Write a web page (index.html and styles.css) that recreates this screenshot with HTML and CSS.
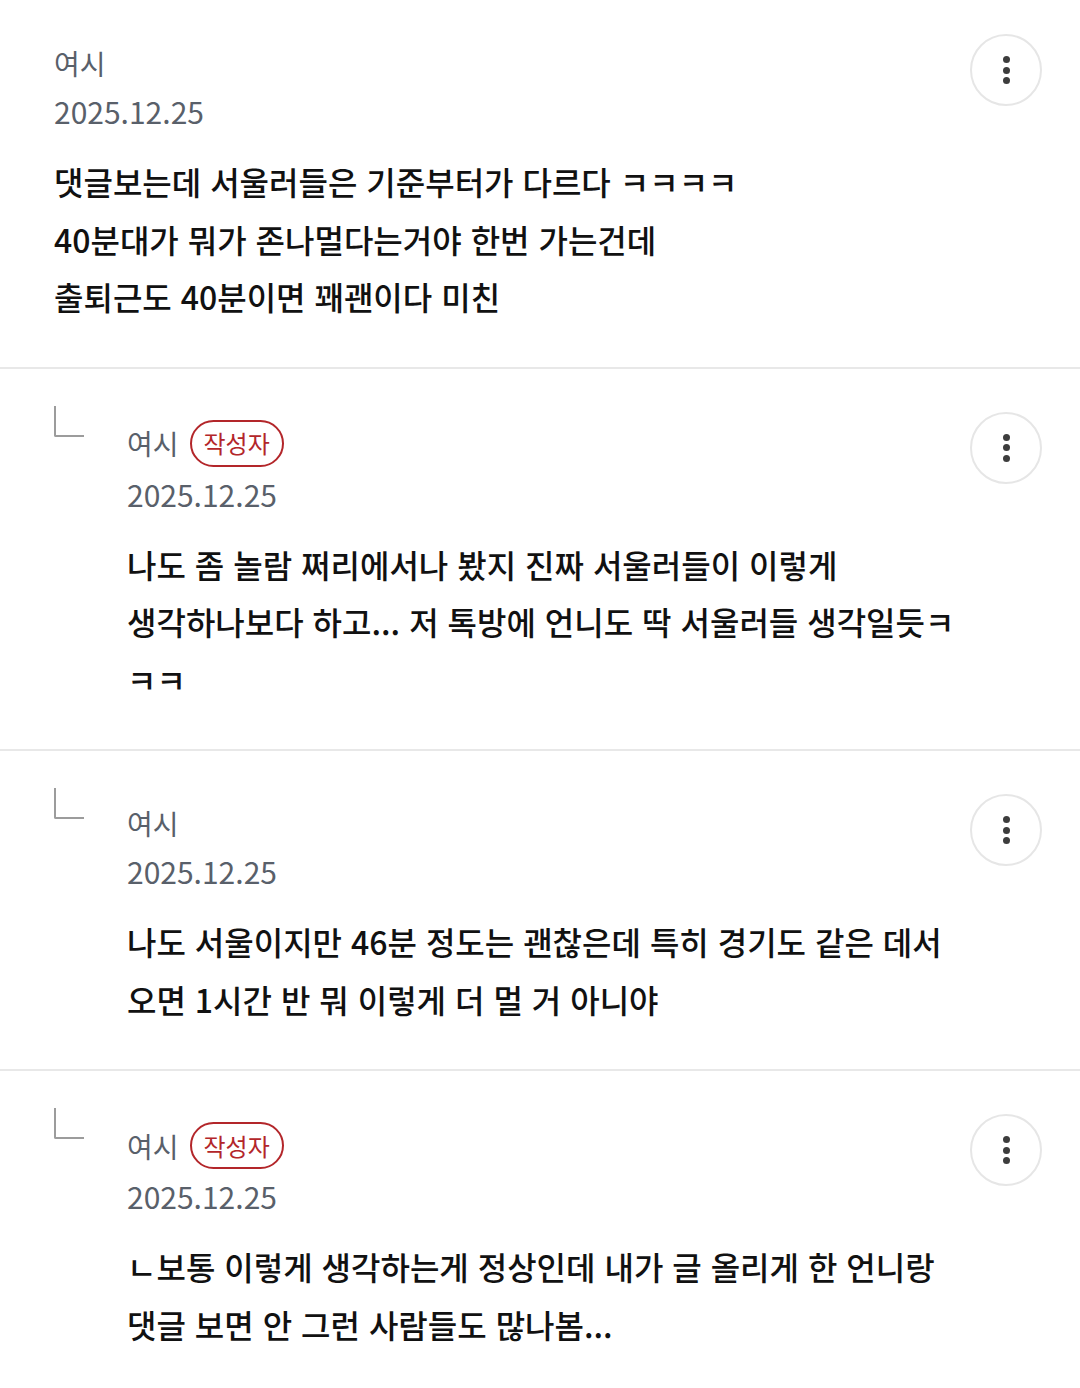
FILE: index.html
```html
<!DOCTYPE html>
<html lang="ko">
<head>
<meta charset="utf-8">
<title>댓글</title>
<link rel="stylesheet" href="styles.css">
</head>
<body>
<div class="comments">
  <div class="comment comment--first">
    <div class="content">
      <div class="meta"><span class="name">여시</span></div>
      <div class="date">2025.12.25</div>
      <p class="text">댓글보는데 서울러들은 기준부터가 다르다 ㅋㅋㅋㅋ<br>40분대가 뭐가 존나멀다는거야 한번 가는건데<br>출퇴근도 40분이면 꽤괜이다 미친</p>
    </div>
    <button class="more" aria-label="더보기"><span class="dot"></span><span class="dot"></span><span class="dot"></span></button>
  </div>

  <div class="comment comment--reply">
    <div class="reply-col"><span class="reply-mark"></span></div>
    <div class="content">
      <div class="meta"><span class="name">여시</span><span class="badge">작성자</span></div>
      <div class="date">2025.12.25</div>
      <p class="text">나도 좀 놀람 쩌리에서나 봤지 진짜 서울러들이 이렇게<br>생각하나보다 하고... 저 톡방에 언니도 딱 서울러들 생각일듯ㅋ<br>ㅋㅋ</p>
    </div>
    <button class="more" aria-label="더보기"><span class="dot"></span><span class="dot"></span><span class="dot"></span></button>
  </div>

  <div class="comment comment--reply">
    <div class="reply-col"><span class="reply-mark"></span></div>
    <div class="content">
      <div class="meta"><span class="name">여시</span></div>
      <div class="date">2025.12.25</div>
      <p class="text">나도 서울이지만 46분 정도는 괜찮은데 특히 경기도 같은 데서<br>오면 1시간 반 뭐 이렇게 더 멀 거 아니야</p>
    </div>
    <button class="more" aria-label="더보기"><span class="dot"></span><span class="dot"></span><span class="dot"></span></button>
  </div>

  <div class="comment comment--reply">
    <div class="reply-col"><span class="reply-mark"></span></div>
    <div class="content">
      <div class="meta"><span class="name">여시</span><span class="badge">작성자</span></div>
      <div class="date">2025.12.25</div>
      <p class="text">ㄴ보통 이렇게 생각하는게 정상인데 내가 글 올리게 한 언니랑<br>댓글 보면 안 그런 사람들도 많나봄...</p>
    </div>
    <button class="more" aria-label="더보기"><span class="dot"></span><span class="dot"></span><span class="dot"></span></button>
  </div>
</div>
</body>
</html>
```

FILE: styles.css
```css
html, body {
  margin: 0;
  padding: 0;
  background: #ffffff;
}

body {
  font-family: "Noto Sans CJK KR", "Noto Sans", sans-serif;
  color: #111111;
  width: 1080px;
  overflow: hidden;
}

.comments {
  display: flex;
  flex-direction: column;
}

.comment {
  display: flex;
  align-items: flex-start;
  padding: 43px 38px 41px 54px;
  border-bottom: 2px solid #e8e8e8;
}

.comment--first {
  padding-top: 34px;
}

.reply-col {
  width: 73px;
  flex: none;
}

.reply-mark {
  display: block;
  width: 28px;
  height: 29px;
  margin-top: -6px;
  border-left: 2px solid #9c9c9c;
  border-bottom: 2px solid #9c9c9c;
  border-bottom-left-radius: 2px;
}

.content {
  flex: 1;
  min-width: 0;
}

.meta {
  display: flex;
  align-items: center;
  margin-top: 11px;
  min-height: 36px;
}

.name {
  font-size: 28px;
  line-height: 36px;
  color: #59606a;
}

.badge {
  display: inline-flex;
  align-items: center;
  justify-content: center;
  box-sizing: border-box;
  height: 47px;
  margin: -3px 0 -3px 11px;
  padding: 0 12px;
  border: 2px solid #b3262a;
  border-radius: 24px;
  font-size: 24px;
  line-height: 1;
  color: #b3262a;
}

.date {
  margin-top: 10px;
  font-size: 30px;
  line-height: 40px;
  color: #59606a;
}

.text {
  margin: 22px 0 0;
  font-size: 32px;
  line-height: 57.5px;
  font-weight: 500;
  color: #111111;
}

.more {
  flex: none;
  width: 72px;
  height: 72px;
  margin: 0;
  padding: 0;
  border: 2px solid #e6e6e6;
  border-radius: 50%;
  background: #ffffff;
  display: flex;
  flex-direction: column;
  align-items: center;
  justify-content: center;
  gap: 3.5px;
}

.dot {
  display: block;
  width: 7px;
  height: 7px;
  border-radius: 50%;
  background: #3d3d3d;
}
```
